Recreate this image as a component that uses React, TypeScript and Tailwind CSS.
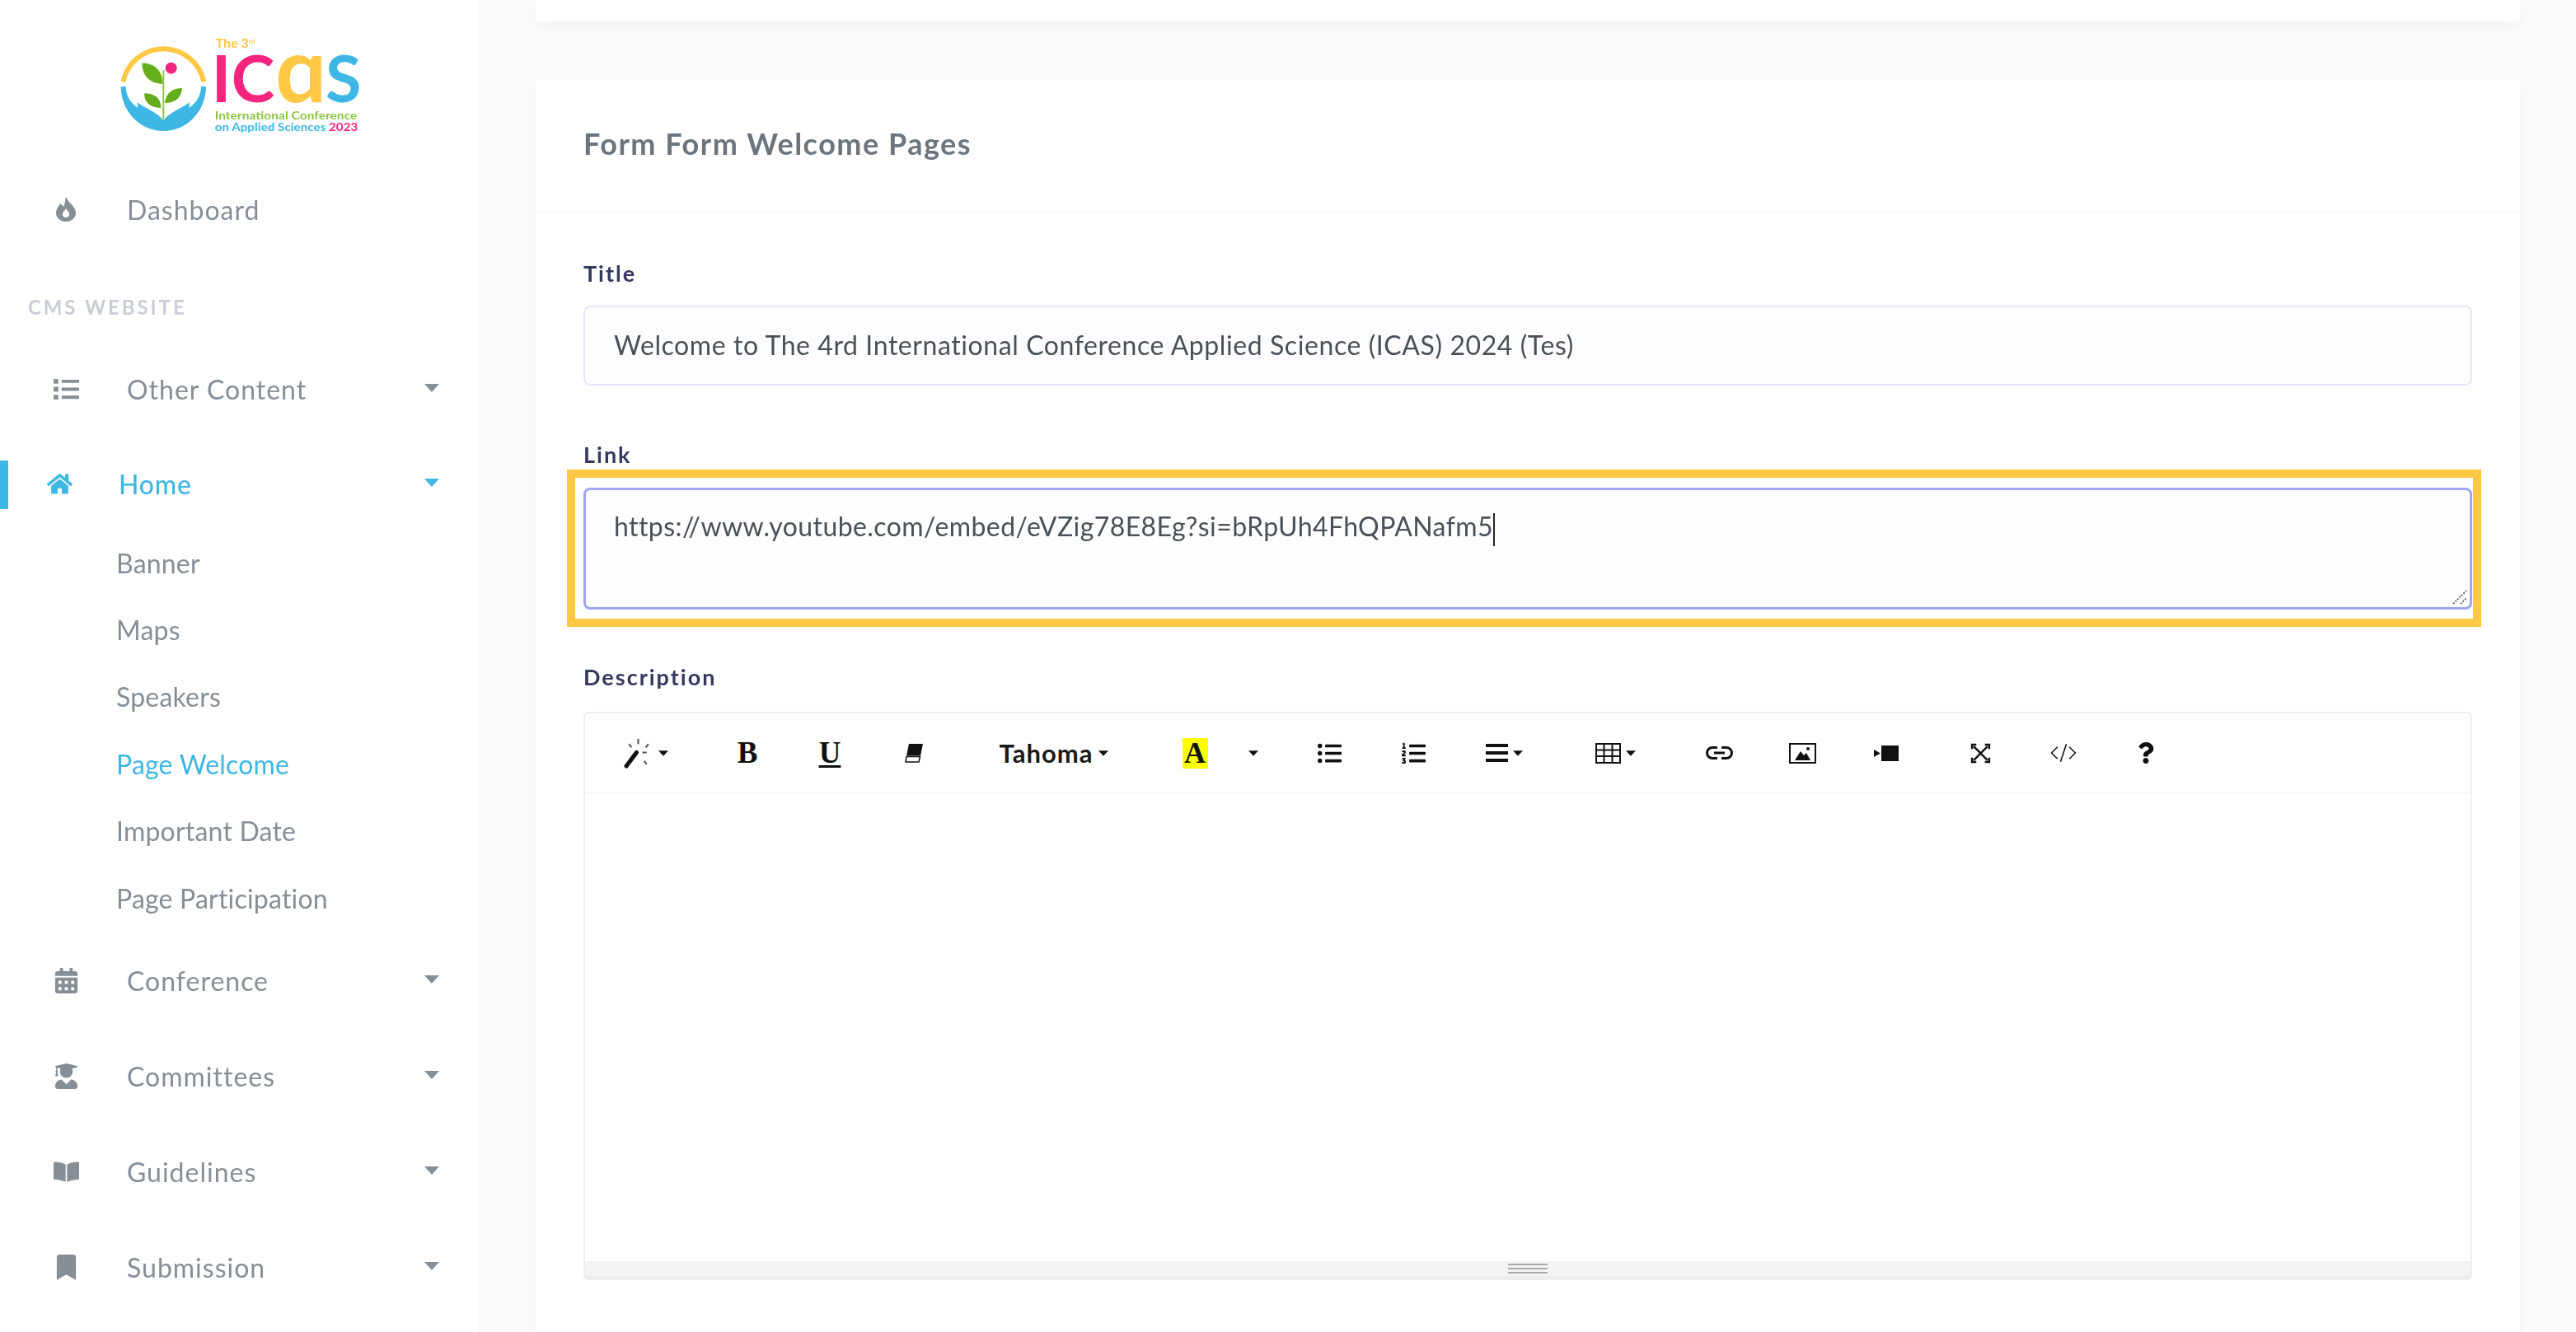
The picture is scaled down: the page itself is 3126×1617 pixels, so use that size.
import React from "react";
import {
  FaList, FaHome, FaCalendarAlt, FaUserGraduate, FaBookOpen, FaBookmark,
  FaListUl, FaListOl, FaQuestion,
} from "react-icons/fa";

const Caret = ({ className = "" }: { className?: string }) => (
  <svg viewBox="0 0 18 10" className={className} fill="currentColor">
    <path d="M0 0h18L9 10z" />
  </svg>
);

const Flame = () => (
  <svg viewBox="0 0 24 30" className="w-[24px] h-[30px]" fill="currentColor" fillRule="evenodd">
    <path d="M12 0C13.500 6 24 11 24 19.500A12 10.500 0 0 1 0 19.500C0 14 3 11.500 5.500 8C7 10 8 11 9.500 11.500C11 8 11 3.500 12 0ZM12 14C10.500 17 8 18 8 21A4 4 0 0 0 16 21C16 18 13.500 17 12 14Z" />
  </svg>
);

const Logo = () => (
  <svg viewBox="0 0 1020 450" className="w-[340px] h-[150px] block blur-[0.6px] overflow-visible">
    <path d="M88 208A150 150 0 0 1 382 208" fill="none" stroke="#ffc845" strokeWidth="18" />
    <path d="M80 225A155 162 0 0 0 390 225L372 225C372 260 352 288 328 302L330 283C300 306 258 318 235 348C212 318 170 306 140 283L142 302C118 288 98 260 98 225Z" fill="#3eb7e5" />
    <path d="M235 165V345" stroke="#8cc63f" strokeWidth="6" />
    <path d="M157 140C200 138 232 165 232 215C190 215 158 190 157 140Z" fill="#64ad1d" />
    <path d="M240 285C245 245 270 232 303 230C300 265 280 285 240 285Z" fill="#64ad1d" />
    <path d="M226 303C190 303 165 285 165 250C200 250 226 265 226 303Z" fill="#64ad1d" />
    <circle cx="263" cy="158" r="21" fill="#f5247f" />
    <g fontFamily="Lato, sans-serif" fontWeight="700">
      <text x="425" y="84" fontSize="48" fill="#ffc845">The 3<tspan fontSize="24" dy="-14">rd</tspan></text>
      <text x="410" y="283" fontSize="238">
        <tspan fill="#f5247f" letterSpacing="2">IC</tspan>
        <tspan fill="#ffc845" fontSize="330">ɑ</tspan>
        <tspan fill="#3eb7e5" dx="-4">S</tspan>
      </text>
      <text x="422" y="345" fontSize="40" fill="#8cc63f" textLength="518" lengthAdjust="spacingAndGlyphs">International Conference</text>
      <text x="422" y="388" fontSize="40" textLength="521" lengthAdjust="spacingAndGlyphs">
        <tspan fill="#3eb7e5">on Applied Sciences </tspan>
        <tspan fill="#f5247f">2023</tspan>
      </text>
    </g>
  </svg>
);

const NavRow = ({ icon, label, mt, caret = true }: { icon: React.ReactNode; label: string; mt: string; caret?: boolean }) => (
  <div className={`flex items-center h-[100px] text-[#868e96] ${mt}`}>
    <span className="w-[50px] ml-[55px] flex justify-center -mt-[2px] text-[31px]">{icon}</span>
    <span className="ml-[49px] tracking-[1px] blur-[0.4px]">{label}</span>
    {caret && <Caret className="ml-auto mr-[47px] w-[18px] h-[10px] -mt-[4px]" />}
  </div>
);

const SubRow = ({ label, active }: { label: string; active?: boolean }) => (
  <div className={`flex items-center h-[81.4px] pl-[141px] tracking-[0.2px] ${active ? "text-[#3eb7e5]" : "text-[#868e96]"}`}>
    <span className="blur-[0.4px]">{label}</span>
  </div>
);

const Sidebar = () => (
  <aside className="w-[580px] shrink-0 bg-white h-full overflow-hidden text-[32px]">
    <div className="pt-[30px] pl-[120px] h-[205px]">
      <Logo />
    </div>
    <NavRow icon={<Flame />} label="Dashboard" mt="" caret={false} />
    <div className="mt-[48px] h-[40px] flex items-center pl-[34px] text-[24px] font-bold tracking-[2.9px] text-[#c9ced6] blur-[0.4px]">CMS WEBSITE</div>
    <NavRow icon={<FaList />} label="Other Content" mt="mt-[30px]" />
    <div className="relative flex items-center h-[100px] mt-[15px] text-[#3eb7e5]">
      <span className="w-[10px] h-[59px] bg-[#3eb7e5]" />
      <span className="w-[50px] ml-[37px] flex justify-center -mt-[2px] text-[31px]"><FaHome /></span>
      <span className="ml-[47px] tracking-[0.8px] font-medium blur-[0.4px]">Home</span>
      <Caret className="ml-auto mr-[47px] w-[18px] h-[10px] -mt-[4px]" />
    </div>
    <div className="mt-[5px]">
      <SubRow label="Banner" />
      <SubRow label="Maps" />
      <SubRow label="Speakers" />
      <SubRow label="Page Welcome" active />
      <SubRow label="Important Date" />
      <SubRow label="Page Participation" />
    </div>
    <NavRow icon={<FaCalendarAlt />} label="Conference" mt="mt-[10px]" />
    <NavRow icon={<FaUserGraduate />} label="Committees" mt="mt-[16px]" />
    <NavRow icon={<FaBookOpen />} label="Guidelines" mt="mt-[16px]" />
    <NavRow icon={<FaBookmark />} label="Submission" mt="mt-[16px]" />
  </aside>
);

const Btn = ({ className = "", children }: { className?: string; children: React.ReactNode }) => (
  <div className={`h-[60px] shrink-0 flex items-center justify-center text-[#111] ${className}`}>{children}</div>
);

const SmallCaret = ({ className = "" }: { className?: string }) => <Caret className={`w-[12px] h-[7px] ${className}`} />;

const Toolbar = () => (
  <div className="h-[98px] shrink-0 border-b-2 border-[#f6f6f6] flex items-center pl-[28px]">
    <Btn className="w-[90px]">
      <svg viewBox="0 0 35 36" className="w-[40px] h-[37px]" fill="none" stroke="#111">
        <path d="M3 33 15 17" strokeWidth="5" strokeLinecap="round" />
        <path d="M17 1v6M6 7l3 4M29 7l-3 4M22 17h5M24 27l3 4" strokeWidth="2" stroke="#555" />
      </svg>
      <SmallCaret className="ml-[4px]" />
    </Btn>
    <Btn className="w-[100px] ml-[29px]"><span className="font-['Liberation_Serif',serif] font-bold text-[37px]">B</span></Btn>
    <Btn className="w-[100px]"><span className="font-['Liberation_Serif',serif] font-bold text-[37px] underline underline-offset-[3px]">U</span></Btn>
    <Btn className="w-[100px] ml-[2px]">
      <svg viewBox="0 0 24 24" className="w-[24px] h-[24px]">
        <path d="M6 1h17l-3 14.500H3z" fill="#111" />
        <path d="M3 16.500h16.500L18 23H2z" fill="#fff" stroke="#111" strokeWidth="1.500" />
      </svg>
    </Btn>
    <Btn className="w-[150px] ml-[45px]"><span className="text-[31px] font-bold tracking-[1px] text-[#1a1a1a]">Tahoma</span><SmallCaret className="ml-[7px]" /></Btn>
    <Btn className="w-[100px] ml-[46px]"><span className="w-[31px] h-[37px] bg-[#ffff00] flex items-center justify-center font-['Liberation_Serif',serif] font-bold text-[36px]">A</span></Btn>
    <Btn className="w-[40px] ml-[1px]"><SmallCaret /></Btn>
    <Btn className="w-[100px] ml-[22px] text-[29px]"><FaListUl /></Btn>
    <Btn className="w-[100px] ml-[2px] text-[29px]"><FaListOl /></Btn>
    <Btn className="w-[100px] ml-[10px]">
      <svg viewBox="0 0 27 22" className="w-[27px] h-[22px]" fill="#111">
        <rect width="27" height="4" y="0" />
        <rect width="27" height="4" y="9" />
        <rect width="27" height="4" y="18" />
      </svg>
      <SmallCaret className="ml-[6px]" />
    </Btn>
    <Btn className="w-[100px] ml-[35px]">
      <svg viewBox="0 0 31 25" className="w-[31px] h-[25px]" fill="none" stroke="#111" strokeWidth="2">
        <rect x="1" y="1" width="29" height="23" />
        <path d="M1 8.500h29M1 16h29M10.500 1v23M20.500 1v23" />
      </svg>
      <SmallCaret className="ml-[6px]" />
    </Btn>
    <Btn className="w-[100px] ml-[26px]">
      <svg viewBox="0 0 33 16" className="w-[33px] h-[16px]" fill="none" stroke="#111" strokeWidth="3">
        <path d="M14 1.500H8a6.500 6.500 0 0 0 0 13h6M19 1.500h6a6.500 6.500 0 0 1 0 13h-6M10 8h13" />
      </svg>
    </Btn>
    <Btn className="w-[100px] ml-[1px]">
      <svg viewBox="0 0 33 25" className="w-[33px] h-[25px]" fill="none" stroke="#111" strokeWidth="2">
        <rect x="1" y="1" width="31" height="23" />
        <path d="M7 21 14 10l4 5 3-3 5 9z" fill="#111" stroke="none" />
        <circle cx="23" cy="7" r="2" fill="#111" stroke="none" />
      </svg>
    </Btn>
    <Btn className="w-[100px] ml-[2px]">
      <svg viewBox="0 0 30 19" className="w-[30px] h-[19px]" fill="#111">
        <rect x="9" y="0" width="21" height="19" />
        <path d="M0 5 8 9.500 0 14z" />
      </svg>
    </Btn>
    <Btn className="w-[100px] ml-[14px]">
      <svg viewBox="0 0 24 24" className="w-[27px] h-[25px]" fill="none" stroke="#111" strokeWidth="2.400">
        <path d="M4 4 20 20M20 4 4 20" />
        <path d="M2 7V2h5M22 7V2h-5M2 17v5h5M22 17v5h-5" />
      </svg>
    </Btn>
    <Btn className="w-[100px] ml-[1px] text-[#111]">
      <svg viewBox="0 0 28 20" className="w-[38px] h-[24px]" fill="none" stroke="#111" strokeWidth="1.300">
        <path d="M8 4 2 10l6 6M20 4l6 6-6 6M17 1l-6 18" />
      </svg>
    </Btn>
    <Btn className="w-[100px] text-[26px]"><FaQuestion /></Btn>
  </div>
);

const Label = ({ children, className = "" }: { children: React.ReactNode; className?: string }) => (
  <div className={`h-[30px] flex items-center text-[27px] font-bold tracking-[2px] text-[#34395e] blur-[0.3px] ${className}`}>{children}</div>
);

export default function App() {
  return (
    <div className="flex w-[3126px] h-[1617px] overflow-hidden bg-[#fafcfc] font-['Lato','Noto_Sans',sans-serif]">
      <Sidebar />
      <main className="flex-1 pl-[70px] pr-[68px] min-w-0">
        <div className="h-[26px] bg-white rounded-b-[6px] shadow-[0_8px_16px_rgba(0,0,0,0.03)]" />
        <section className="mt-[71px] bg-white rounded-t-[6px] h-[1600px] shadow-[0_8px_16px_rgba(0,0,0,0.03)]">
          <header className="h-[162px] border-b-2 border-[#f9f9f9] pl-[58px] flex items-center">
            <h1 className="text-[36px] font-bold tracking-[1.5px] text-[#6c757d] -mt-[6px] blur-[0.3px]">Form Form Welcome Pages</h1>
          </header>
          <div className="px-[58px] pt-[58px]">
            <Label>Title</Label>
            <div className="mt-[24px] h-[97px] rounded-[8px] border-2 border-[#e4e6fc] bg-[#fdfdff] pl-[35px] pb-[2px] flex items-center text-[32px] tracking-[0.58px] text-[#495057]">
              <span className="blur-[0.3px]">Welcome to The 4rd International Conference Applied Science (ICAS) 2024 (Tes)</span>
            </div>
            <Label className="mt-[69px]">Link</Label>
            <div className="relative mt-[25px] h-[148px] rounded-[8px] border-[3px] border-[#9ea6f5] bg-[#fefeff] pl-[34px] pt-[20px] text-[32px] tracking-[0.42px] text-[#495057]">
              <span className="blur-[0.3px]">https://www.youtube.com/embed/eVZig78E8Eg?si=bRpUh4FhQPANafm5</span>
              <span className="inline-block w-[2px] h-[40px] bg-[#222] align-middle" />
              <svg viewBox="0 0 20 20" className="absolute right-[2px] bottom-[2px] w-[20px] h-[20px]" stroke="#666" strokeWidth="2" strokeDasharray="2 1.500">
                <path d="M2 18 18 2M11 18l7-7" />
              </svg>
              <div className="absolute -left-[23px] -right-[14px] -top-[25px] -bottom-[24px] border-[10px] border-[#ffc845] pointer-events-none" />
            </div>
            <Label className="mt-[67px]">Description</Label>
            <div className="mt-[27px] h-[690px] rounded-[6px] border-2 border-[#eeeeee] bg-white flex flex-col">
              <Toolbar />
              <div className="flex-1" />
              <div className="h-[21px] bg-[#f3f3f3] border-b-[3px] border-[#ececec] flex items-center justify-center">
                <div className="w-[48px] flex flex-col gap-[3px]">
                  <div className="h-[2px] bg-[#a9a9a9]" />
                  <div className="h-[2px] bg-[#a9a9a9]" />
                  <div className="h-[2px] bg-[#a9a9a9]" />
                </div>
              </div>
            </div>
          </div>
        </section>
      </main>
    </div>
  );
}
